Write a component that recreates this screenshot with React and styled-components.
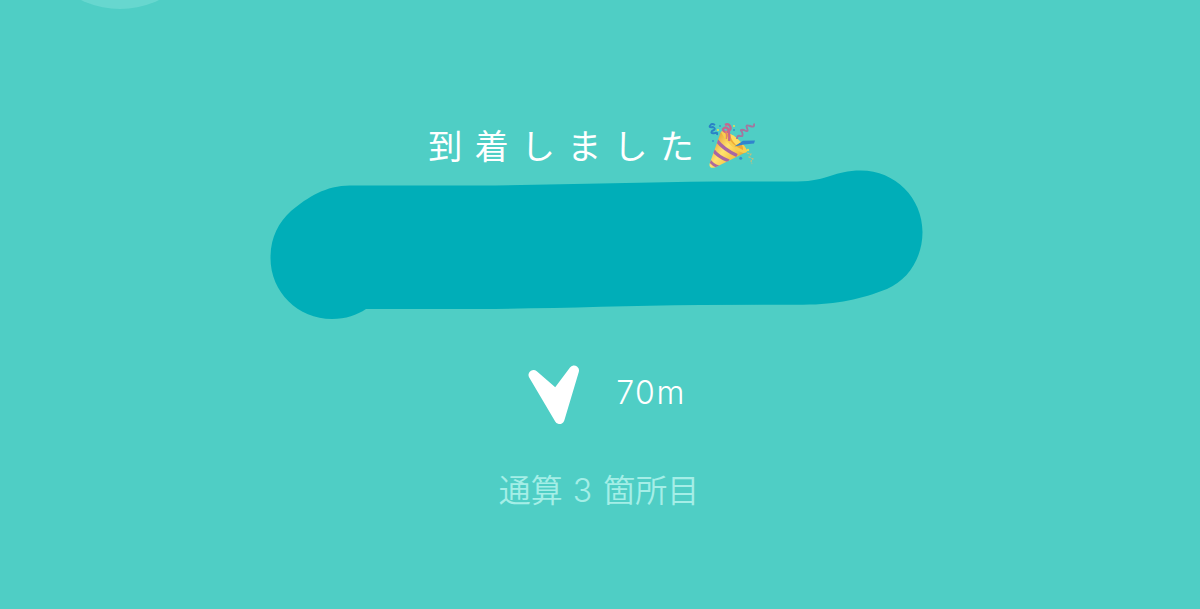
import styled, { createGlobalStyle } from "styled-components";

export default function App() {
    return (
        <>
        <GlobalStyle />
        <Tela>
            <Bolha />
            <Titulo>
                <TextoTitulo>到着しました</TextoTitulo>
                <Cracker />
            </Titulo>
            <Pincelada />
            <Distancia>
                <Seta />
                <Metros>70m</Metros>
            </Distancia>
            <Contagem>通算 <span>3</span> 箇所目</Contagem>
        </Tela>
        </>
    )
}

function Cracker() {
    return (
        <IconeCracker viewBox="0 0 48 48" aria-label="party">
            <defs>
                <linearGradient id="cone" x1="0.1" y1="0.4" x2="0.75" y2="0.95">
                    <stop offset="0" stopColor="#e8a53a" />
                    <stop offset="0.35" stopColor="#ffe36e" />
                    <stop offset="0.65" stopColor="#f6c245" />
                    <stop offset="1" stopColor="#b87424" />
                </linearGradient>
                <clipPath id="corpo">
                    <path d="M1.500 42 L13 9.500 Q25 14 38.500 30 L7 45.500 Q1 47 1.500 42Z" />
                </clipPath>
            </defs>
            <g clipPath="url(#corpo)">
                <rect width="48" height="48" fill="url(#cone)" />
                <path d="M8.500 18 Q15 27 29 33.500" stroke="#a866a3" strokeWidth="3.4" fill="none" />
                <path d="M4.500 27.500 Q10 35 21 39" stroke="#a866a3" strokeWidth="3.4" fill="none" />
                <path d="M0.500 37 Q4 43 11 45" stroke="#ad6b9c" strokeWidth="3" fill="none" />
            </g>
            <path d="M13 10 Q15 7 24 13 Q35 20 39 28 Q40 31 35 31 Q21 26 13 10Z" fill="#f8cf50" />
            <path d="M17 11 Q24 11 31 19 Q36 25 35 28 Q24 24 17 11Z" fill="#eda937" />
            <path d="M22 12 Q28 14 33 21 L28 23 Q23 18 22 12Z" fill="#ffdc60" />
            <path d="M21 19 Q22 12 20 7 Q18 4 15 7 Q15 10 19 10 Q24 8 22 4 Q20 1 17 3" stroke="#c6688e" strokeWidth="2.3" fill="none" />
            <path d="M18.500 17 Q19 13 18 9" stroke="#e58369" strokeWidth="1.5" fill="none" />
            <path d="M9 13 Q10 10 7 11 Q2 12 4 9 Q9 7 5 5 Q0 6 2.500 3 Q4 1 7 3" stroke="#2a82c6" strokeWidth="1.9" fill="none" />
            <path d="M29 17 Q29 13 32 14 Q36 15 34 10 Q31 7 36 8 Q41 11 39 6 Q37 2 42 4 Q47 6 46 1.500" stroke="#a2779f" strokeWidth="1.9" fill="none" />
            <path d="M26.500 24.500 L35 18.800 L47 18.500 L46 21.500 L36 22.500Z" fill="#3184cd" />
            <path d="M39 31 L43 32 L41 35 L45 37 L43 39 L44 42" stroke="#c9bf79" strokeWidth="1.1" fill="none" strokeDasharray="2.5 1" />
            <g fill="#348fce">
                <circle cx="5" cy="19" r="0.9" />
                <circle cx="26" cy="8" r="1" />
                <circle cx="32.700" cy="36.300" r="1.5" />
                <circle cx="12" cy="4" r="0.9" />
            </g>
            <g fill="#e9dc58">
                <circle cx="10" cy="8" r="1.1" />
                <circle cx="26" cy="4" r="1" />
                <circle cx="40" cy="28" r="1.2" />
            </g>
        </IconeCracker>
    )
}

function Pincelada() {
    return (
        <FormaPincelada viewBox="270 170 654 150">
            <path d="M350 185.500 L480 185.500 C560 185 640 182.500 715 181.600 L797 181.500 C830 181 833 170.500 861 170.500 C895 170.500 922.500 198 922.500 232 C922.500 258 908 280 887 289 C861 299 838 304.500 803 304.700 L700 305 C620 306 550 308.500 480 309 L366 309 C357 315 346 319 332 319 C298 319 270.500 292 270.500 258 C270.500 238 278 223 291 211 C308 197 326 185.500 350 185.500Z" />
        </FormaPincelada>
    )
}

function Seta() {
    return (
        <IconeSeta viewBox="0 0 52 60">
            <path d="M5.500 10 L28 29.500 L46 5.500 L31.500 54 Z" />
        </IconeSeta>
    )
}

const GlobalStyle = createGlobalStyle`
body {
    margin: 0;
    background-color: #4fcec5;
}
* {
    box-sizing: border-box;
}
`
const Tela = styled.main`
position: relative;
width: 1200px;
height: 609px;
padding-top: 122px;
overflow: hidden;
display: flex;
flex-direction: column;
align-items: center;
background-color: #4fcec5;
color: #ffffff;
font-family: Inter, "Noto Sans CJK JP", sans-serif;
`
const Bolha = styled.div`
position: absolute;
left: 31px;
top: -169px;
width: 178px;
height: 178px;
border-radius: 50%;
background-color: #67d7cf;
`
const Titulo = styled.div`
display: flex;
align-items: center;
height: 48px;
margin-right: 16px;
`
const TextoTitulo = styled.h1`
margin: 0 1.5px 2px 0;
font-family: "Noto Sans CJK JP", sans-serif;
font-size: 34px;
font-weight: 400;
line-height: 46px;
letter-spacing: 12.3px;
white-space: nowrap;
`
const IconeCracker = styled.svg`
width: 48px;
height: 48px;
`
const FormaPincelada = styled.svg`
flex: none;
width: 654px;
height: 150px;
margin-right: 6px;
fill: #00aeb8;
`
const Distancia = styled.div`
display: flex;
align-items: center;
height: 60px;
margin-top: 45px;
margin-left: 14px;
`
const IconeSeta = styled.svg`
width: 52px;
height: 60px;
fill: #ffffff;
stroke: #ffffff;
stroke-width: 10px;
stroke-linejoin: round;
`
const Metros = styled.span`
margin: 0 0 5px 36px;
font-size: 32px;
font-weight: 300;
line-height: 54px;
letter-spacing: 1.5px;
`
const Contagem = styled.p`
margin: 40px 2px 0 0;
height: 48px;
color: #a5eee7;
font-family: "Noto Sans CJK JP", sans-serif;
font-size: 32px;
font-weight: 350;
line-height: 47px;
white-space: pre;

span {
    margin: 0 4px 0 3px;
    font-family: Inter, sans-serif;
}
`
